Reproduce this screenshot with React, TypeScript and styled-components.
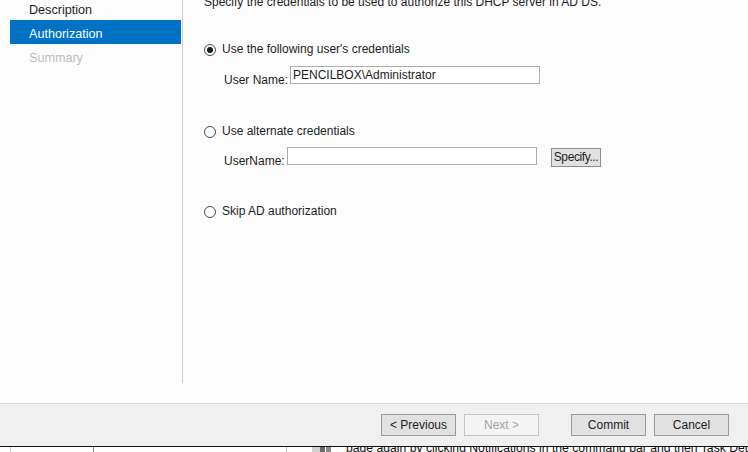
import React from "react";
import styled, { createGlobalStyle } from "styled-components";

const Global = createGlobalStyle`
  html, body { margin: 0; padding: 0; background: #fcfcfc; }
  body { font-family: "Liberation Sans", Arial, sans-serif; }
  * { box-sizing: border-box; }
`;

const Window = styled.div`
  width: 748px;
  height: 452px;
  overflow: hidden;
  display: flex;
  flex-direction: column;
  background: #fcfcfc;
  color: #1e1e1e;
  font-size: 12px;
`;

const Main = styled.div`
  flex: none;
  height: 404px;
  display: flex;
  align-items: flex-start;
  border-bottom: 1px solid #dadada;
`;

const Nav = styled.nav`
  flex: none;
  width: 183px;
  height: 383px;
  padding: 0 1px 0 10px;
  border-right: 1px solid #d0d0d0;
  display: flex;
  flex-direction: column;
`;

const NavList = styled.div`
  margin-top: -4px;
  display: flex;
  flex-direction: column;
`;

const NavItem = styled.div<{ $state: "normal" | "active" | "disabled" }>`
  height: 24px;
  line-height: 20px;
  padding: 4px 0 0 19px;
  font-size: 12.6px;
  white-space: nowrap;
  background: ${(p) => (p.$state === "active" ? "#0072c6" : "transparent")};
  color: ${(p) =>
    p.$state === "active" ? "#ffffff" : p.$state === "disabled" ? "#bcbcbc" : "#1e1e1e"};
`;

const Content = styled.div`
  flex: 1;
  padding-left: 21px;
  display: flex;
  flex-direction: column;
`;

const Title = styled.div`
  margin-top: -5px;
  line-height: 15px;
  white-space: nowrap;
`;

const RadioRow = styled.label<{ $mt: number }>`
  margin-top: ${(p) => p.$mt}px;
  height: 15px;
  display: flex;
  align-items: center;
  gap: 6px;
  line-height: 15px;
  white-space: nowrap;
`;

const RadioCircle = styled.span<{ $checked?: boolean }>`
  flex: none;
  width: 12px;
  height: 12px;
  border-radius: 50%;
  border: 1px solid #4a4a4a;
  background: #ffffff;
  display: flex;
  align-items: center;
  justify-content: center;
  &::after {
    content: "";
    width: 6px;
    height: 6px;
    border-radius: 50%;
    background: ${(p) => (p.$checked ? "#1a1a1a" : "transparent")};
  }
`;

const Field = styled.div<{ $mt: number }>`
  margin-top: ${(p) => p.$mt}px;
  margin-left: 20px;
  display: flex;
  align-items: flex-start;
`;

const FieldLabel = styled.span<{ $drop: number; $width: number }>`
  flex: none;
  width: ${(p) => p.$width}px;
  margin-top: ${(p) => p.$drop}px;
  line-height: 15px;
  white-space: nowrap;
`;

const TextBox = styled.div<{ $width: number }>`
  flex: none;
  width: ${(p) => p.$width}px;
  height: 18px;
  border: 1px solid #abadb3;
  background: #ffffff;
  padding: 1px 0 0 2px;
  line-height: 15px;
  white-space: nowrap;
`;

const SmallButton = styled.button`
  flex: none;
  margin: 1px 0 0 14px;
  width: 50px;
  height: 19px;
  padding: 0;
  border: 1px solid #8f8f8f;
  background: #e1e1e1;
  font-family: inherit;
  font-size: 12px;
  letter-spacing: -0.4px;
  color: #1e1e1e;
  line-height: 15px;
`;

const Footer = styled.div`
  flex: none;
  height: 42px;
  background: #f0f0f0;
  display: flex;
  align-items: center;
  justify-content: flex-end;
  padding-right: 19px;
`;

const FooterButton = styled.button<{ $gap: number; $disabled?: boolean }>`
  margin-left: ${(p) => p.$gap}px;
  width: 75px;
  height: 22px;
  padding: 0;
  font-family: inherit;
  font-size: 12px;
  border: 1px solid ${(p) => (p.$disabled ? "#c4c4c4" : "#9a9a9a")};
  background: ${(p) => (p.$disabled ? "#f4f4f4" : "#e1e1e1")};
  color: ${(p) => (p.$disabled ? "#a3a3a3" : "#1e1e1e")};
`;

const Behind = styled.div`
  flex: none;
  height: 6px;
  border-top: 1px solid #111111;
  background: #ffffff;
  display: flex;
  overflow: hidden;
`;

const BehindCell = styled.div<{ $width: number; $line?: string }>`
  flex: none;
  width: ${(p) => p.$width}px;
  border-left: ${(p) => (p.$line ? `1px solid ${p.$line}` : "none")};
`;

const BehindIcon = styled.svg`
  flex: none;
  display: block;
`;

const BehindText = styled.div`
  flex: none;
  margin: -6px 0 0 14px;
  font-size: 12.2px;
  line-height: 15px;
  white-space: nowrap;
  color: #111111;
`;

export default function App() {
  return (
    <>
      <Global />
      <Window>
        <Main>
          <Nav>
            <NavList>
              <NavItem $state="normal">Description</NavItem>
              <NavItem $state="active">Authorization</NavItem>
              <NavItem $state="disabled">Summary</NavItem>
            </NavList>
          </Nav>
          <Content>
            <Title>Specify the credentials to be used to authorize this DHCP server in AD DS.</Title>

            <RadioRow $mt={32}>
              <RadioCircle $checked />
              Use the following user's credentials
            </RadioRow>
            <Field $mt={9}>
              <FieldLabel $drop={7} $width={66}>User Name:</FieldLabel>
              <TextBox $width={250}>PENCILBOX\Administrator</TextBox>
            </Field>

            <RadioRow $mt={36}>
              <RadioCircle />
              Use alternate credentials
            </RadioRow>
            <Field $mt={8}>
              <FieldLabel $drop={7} $width={63}>UserName:</FieldLabel>
              <TextBox $width={250} />
              <SmallButton>Specify...</SmallButton>
            </Field>

            <RadioRow $mt={35}>
              <RadioCircle />
              Skip AD authorization
            </RadioRow>
          </Content>
        </Main>
        <Footer>
          <FooterButton $gap={0}>&lt; Previous</FooterButton>
          <FooterButton $gap={8} $disabled>Next &gt;</FooterButton>
          <FooterButton $gap={32}>Commit</FooterButton>
          <FooterButton $gap={8}>Cancel</FooterButton>
        </Footer>
        <Behind>
          <BehindCell $width={10} />
          <BehindCell $width={83} $line="#c8c8c8" />
          <BehindCell $width={193} $line="#8a8a8a" />
          <BehindCell $width={26} $line="#c0c0c0" />
          <BehindIcon width="20" height="6" viewBox="0 0 20 6">
            <rect x="0" y="0" width="8" height="6" fill="#d0d0d0" />
            <rect x="8" y="0" width="5" height="6" fill="#6a6a6a" />
            <rect x="14" y="0" width="5" height="6" fill="#8a8a8a" />
          </BehindIcon>
          <BehindText>page again by clicking Notifications in the command bar and then Task Details.</BehindText>
        </Behind>
      </Window>
    </>
  );
}
